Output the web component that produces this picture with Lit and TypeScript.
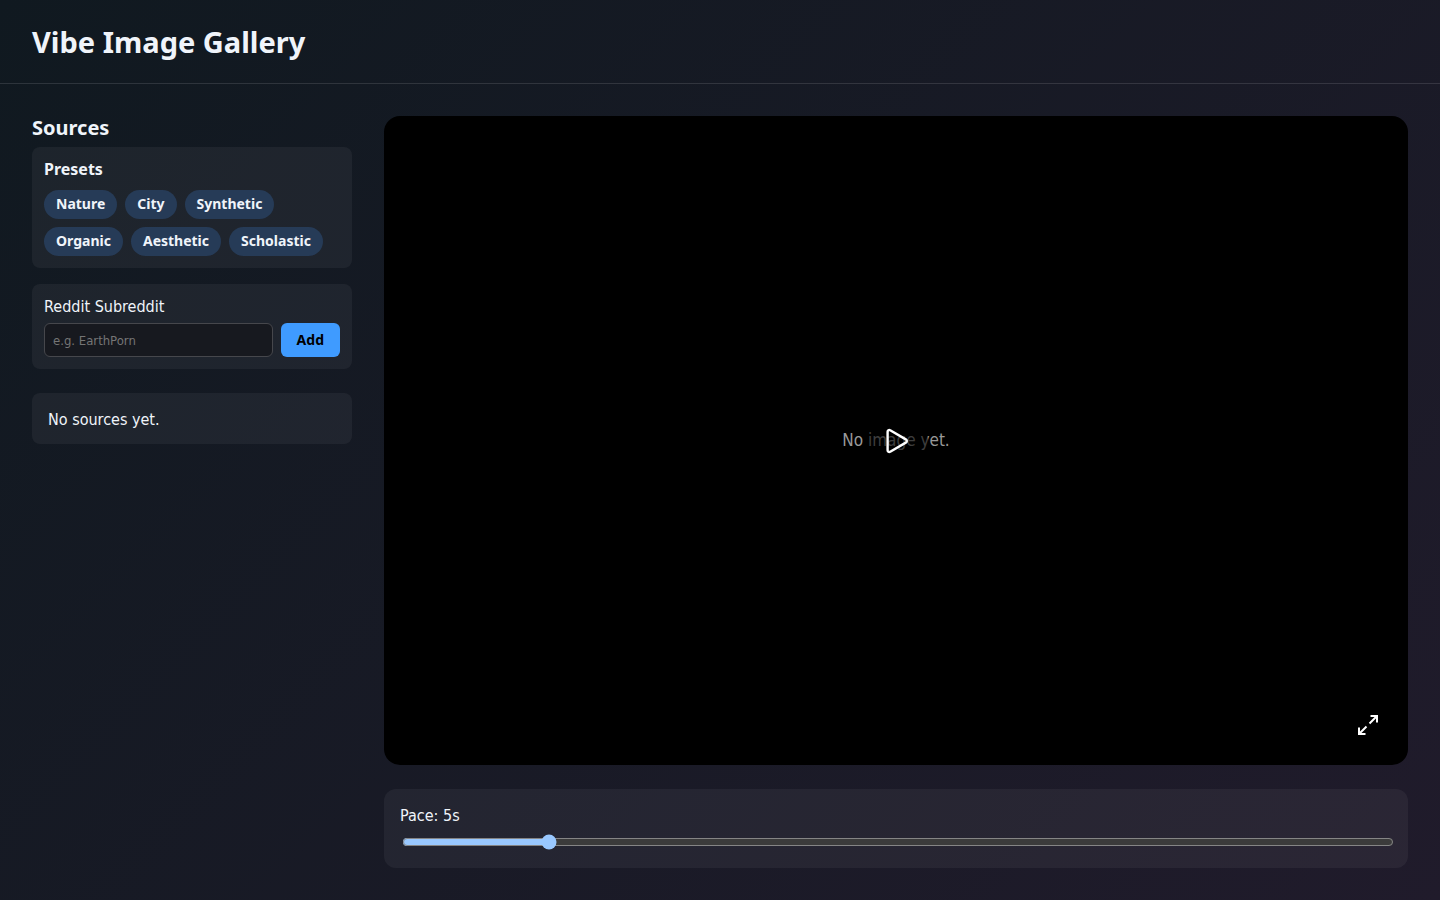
import { LitElement, html, css } from "lit";
import { customElement, state } from "lit/decorators.js";

const PRESETS = ["Nature", "City", "Synthetic", "Organic", "Aesthetic", "Scholastic"];

@customElement("app-root")
export class AppRoot extends LitElement {
  static styles = css`
    :host {
      display: flex;
      flex-direction: column;
      min-height: 100vh;
      box-sizing: border-box;
      color-scheme: dark;
      color: #f0f4fa;
      background: linear-gradient(135deg, #101920, #201b2b);
      --regular: Tahoma, "DejaVu Sans Condensed", sans-serif;
      --bold: Tahoma, "Noto Sans", sans-serif;
      font: 16px/21px var(--regular);
    }
    *, *::before { box-sizing: border-box; }
    .header {
      padding: 24px 32px;
      border-bottom: 1px solid rgba(255, 255, 255, 0.12);
    }
    h1, h2, h3, p { margin: 0; }
    h1 { font: 700 29px/35px var(--bold); }
    h2 { font: 700 20px/23px var(--bold); margin-bottom: 8px; }
    h3 { font: 700 16px/21px var(--bold); margin-bottom: 10px; }
    .main {
      flex: 1;
      display: grid;
      grid-template-columns: 320px minmax(0, 1fr);
      gap: 32px;
      padding: 32px;
    }
    .card {
      padding: 12px;
      border-radius: 8px;
      background: rgba(255, 255, 255, 0.05);
    }
    .presets { margin-bottom: 16px; }
    .pills { display: flex; flex-wrap: wrap; gap: 8px; }
    .pill {
      border: 0;
      border-radius: 16px;
      padding: 5px 12px 7px;
      font: 700 14px/17px var(--bold);
      color: #f0f4fa;
      background: #263b57;
    }
    .add label { display: block; margin-bottom: 6px; }
    .row { display: flex; gap: 8px; }
    .text {
      flex: 1;
      min-width: 0;
      height: 34px;
      padding: 8px;
      border: 1px solid #46474c;
      border-radius: 6px;
      background: #17191f;
      color: inherit;
      font: 13px/16px var(--regular);
    }
    .text::placeholder { color: #757575; }
    .submit {
      border: 0;
      border-radius: 6px;
      padding: 8px 16px;
      font: 700 14px/18px var(--bold);
      color: #000;
      background: #3f9bff;
    }
    .empty { margin-top: 24px; padding: 16px 16px 14px; }
    .viewer { display: flex; flex-direction: column; gap: 24px; }
    .stage {
      position: relative;
      flex: 1;
      min-height: 240px;
      display: grid;
      place-items: center;
      border-radius: 16px;
      background: #000;
    }
    .note { color: #999; font-size: 17px; }
    .control {
      position: absolute;
      display: grid;
      place-items: center;
      padding: 0;
      border: 0;
      color: #fff;
      background: none;
    }
    .play {
      inset: 0;
      margin: auto;
      width: 64px;
      height: 64px;
      border-radius: 50%;
      background: rgba(0, 0, 0, 0.6);
    }
    .full { right: 16px; bottom: 16px; width: 48px; height: 48px; }
    svg { display: block; fill: none; stroke: currentColor; }
    .pace {
      padding: 16px;
      border-radius: 12px;
      background: rgba(255, 255, 255, 0.05);
    }
    .pace label { display: block; margin-bottom: 8px; }
    .pace input { display: block; width: 100%; margin: 2px; accent-color: #99c8ff; }
  `;

  @state() private pace = 5;

  render() {
    return html`
      <header class="header"><h1>Vibe Image Gallery</h1></header>
      <main class="main">
        <aside>
          <h2>Sources</h2>
          <section class="card presets">
            <h3>Presets</h3>
            <div class="pills">
              ${PRESETS.map((p) => html`<button class="pill" type="button">${p}</button>`)}
            </div>
          </section>
          <form class="card add" @submit=${(e: Event) => e.preventDefault()}>
            <label for="subreddit">Reddit Subreddit</label>
            <div class="row">
              <input class="text" id="subreddit" type="text" placeholder="e.g. EarthPorn" />
              <button class="submit" type="submit">Add</button>
            </div>
          </form>
          <p class="card empty">No sources yet.</p>
        </aside>
        <section class="viewer">
          <div class="stage">
            <p class="note">No image yet.</p>
            <button class="control play" type="button" aria-label="Play">
              <svg width="32" height="32" viewBox="0 0 32 32" stroke-width="2.4" stroke-linejoin="round">
                <path d="M7.6 6.8c0-1.5 1.3-2.3 2.6-1.6l15.6 9.2c1.4.8 1.4 2.4 0 3.2l-15.6 9.2c-1.3.7-2.6-.1-2.6-1.6z" />
              </svg>
            </button>
            <button class="control full" type="button" aria-label="Fullscreen">
              <svg width="24" height="24" viewBox="0 0 24 24" stroke-width="2">
                <path d="M14.5 3H21v6.5M21 3l-7.5 7.5M9.5 21H3v-6.5M3 21l7.5-7.5" />
              </svg>
            </button>
          </div>
          <div class="pace">
            <label for="pace">Pace: ${this.pace}s</label>
            <input
              id="pace"
              type="range"
              min="1"
              max="29"
              .value=${String(this.pace)}
              @input=${(e: Event) => (this.pace = Number((e.target as HTMLInputElement).value))}
            />
          </div>
        </section>
      </main>
    `;
  }
}
